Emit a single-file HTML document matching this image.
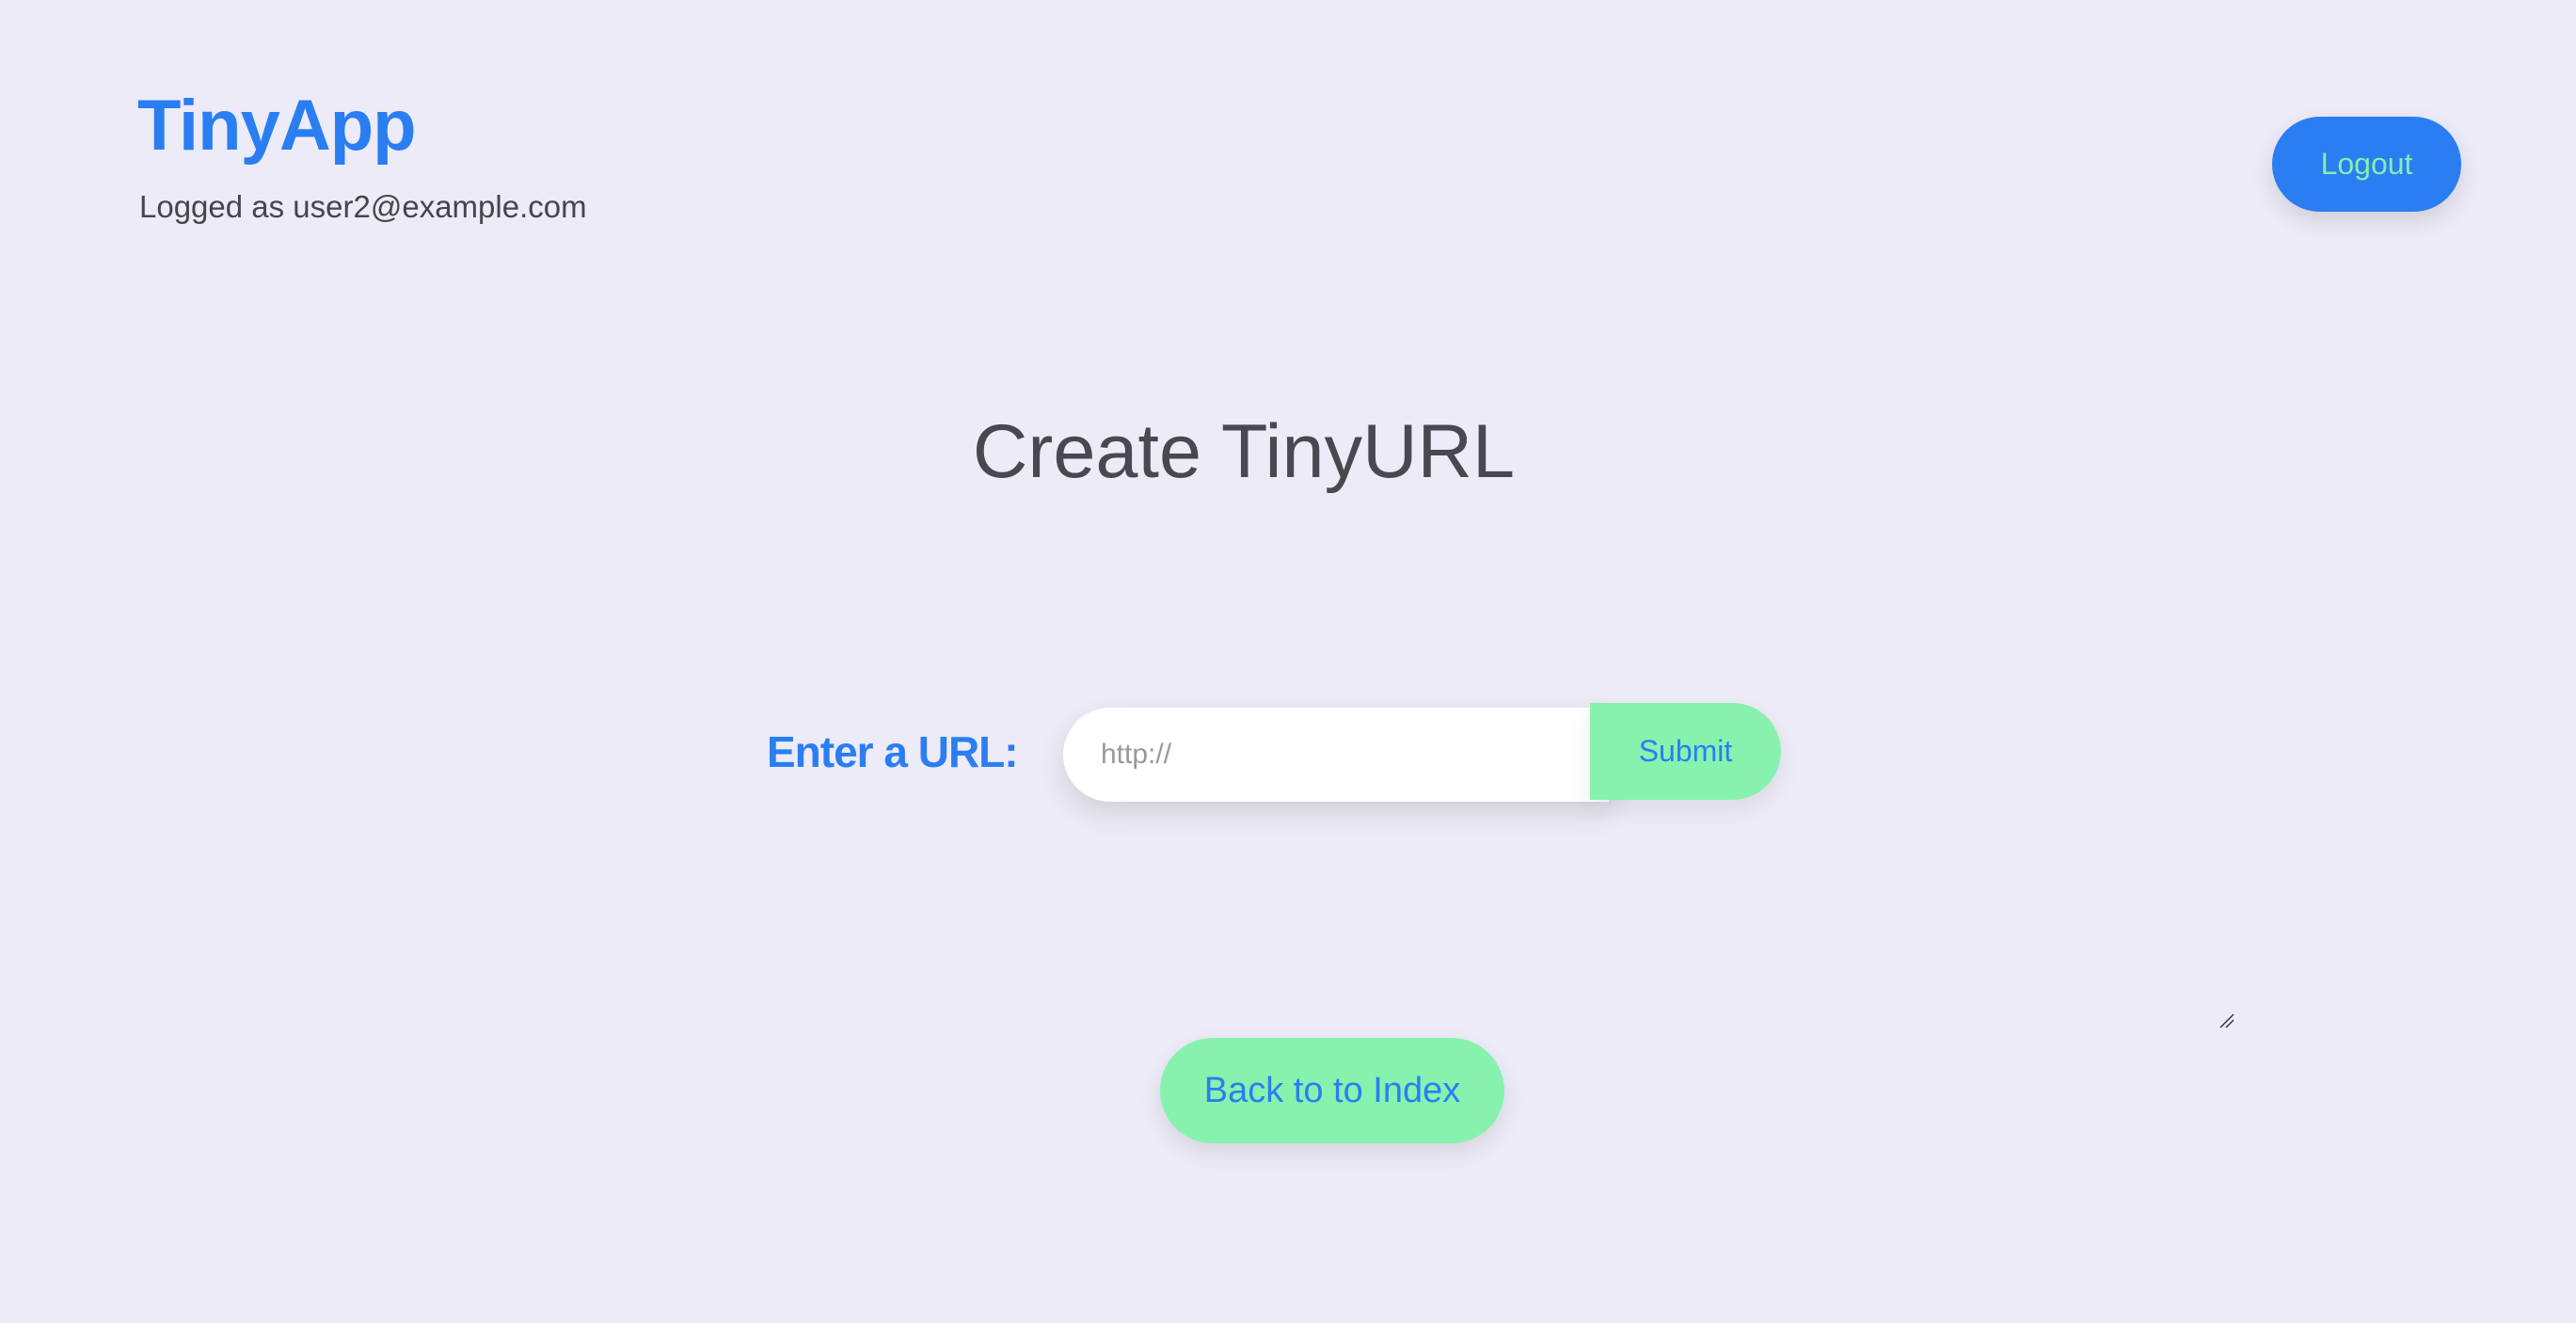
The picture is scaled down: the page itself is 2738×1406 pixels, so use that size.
<!DOCTYPE html>
<html><head><meta charset="utf-8"><style>
html,body{margin:0;padding:0;}
body{width:2738px;height:1406px;background:#edebf7;position:relative;overflow:hidden;font-family:"Liberation Sans",sans-serif;}
.a{position:absolute;white-space:nowrap;}
#logo{left:146px;top:90px;font-size:76px;font-weight:bold;color:#2a7ef2;letter-spacing:-1px;}
#user{left:148px;top:201px;font-size:33px;color:#46444c;}
#logout{left:2415px;top:124px;width:201px;height:101px;border-radius:51px;background:#2a7ef2;color:#7ff0b0;font-size:32px;line-height:101px;text-align:center;box-shadow:0 10px 24px rgba(0,0,0,.12);}
#title{left:0;width:2644px;text-align:center;top:434px;font-size:81px;color:#4a4750;}
#label{left:815px;top:772px;font-size:46px;font-weight:bold;color:#2a7ef2;letter-spacing:-1px;}
#input{left:1130px;top:752px;width:580px;height:100px;border-radius:50px 0 0 50px;background:#fff;box-shadow:0 12px 30px rgba(0,0,0,.12);}
#ph{left:1170px;top:785px;font-size:30px;color:#999;}
#submit{left:1690px;top:747px;width:203px;height:103px;border-radius:0 52px 52px 0;background:#86f2ae;color:#2a7ef2;font-size:32px;line-height:103px;text-align:center;box-shadow:0 10px 24px rgba(0,0,0,.08);}
#back{left:1233px;top:1103px;width:366px;height:112px;border-radius:56px;background:#86f2ae;color:#2a7ef2;font-size:38px;line-height:112px;text-align:center;box-shadow:0 10px 24px rgba(0,0,0,.10);}
</style></head><body>
<div class="a" id="logo">TinyApp</div>
<div class="a" id="user">Logged as user2@example.com</div>
<div class="a" id="logout">Logout</div>
<div class="a" id="title">Create TinyURL</div>
<div class="a" id="label">Enter a URL:</div>
<div class="a" id="input"></div>
<div class="a" id="ph">http://</div>
<div class="a" id="submit">Submit</div>
<svg class="a" style="left:2358px;top:1076px" width="18" height="18"><path d="M2 16L16 2M8 16L16 8" stroke="#333" stroke-width="1.5"/></svg>
<div class="a" id="back">Back to to Index</div>
</body></html>
